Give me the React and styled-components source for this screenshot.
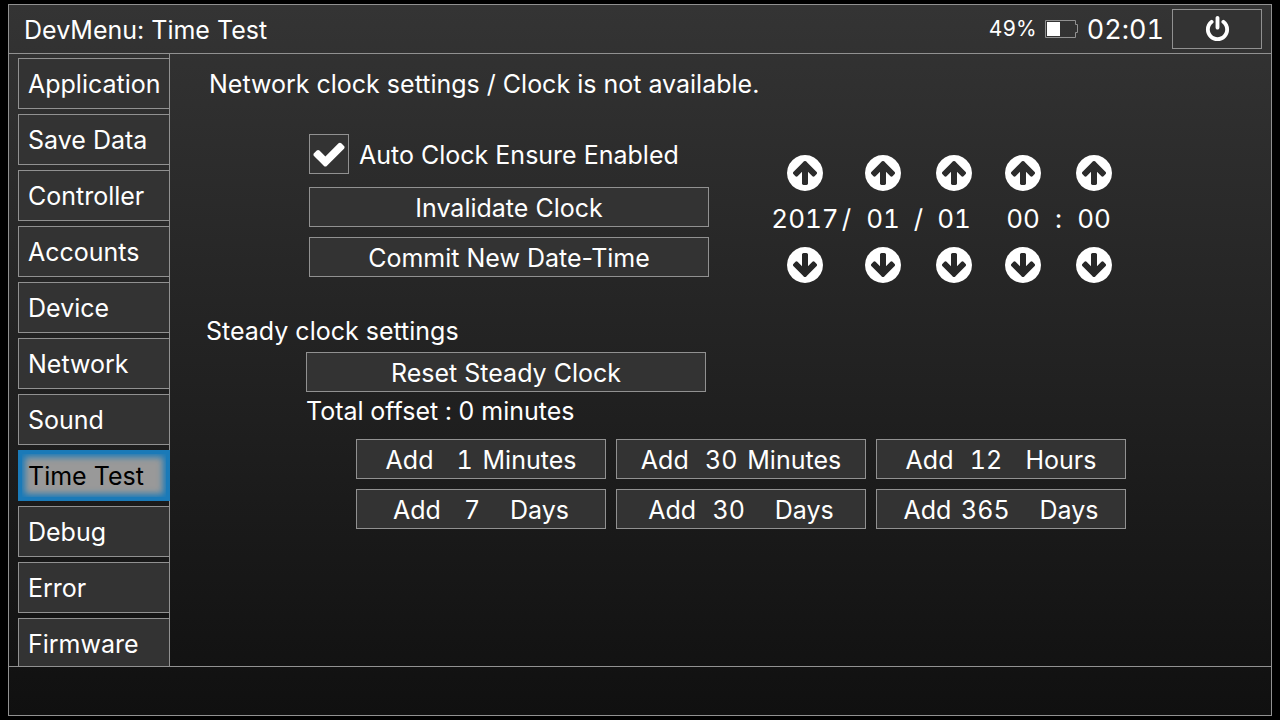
import React, { useState } from "react";
import styled, { createGlobalStyle } from "styled-components";

const LINE = "#919191";

const GlobalStyle = createGlobalStyle`
  *, *::before, *::after { box-sizing: border-box; }
  body {
    margin: 0;
    background: #000;
    color: #fff;
    font: 25px/32px Inter, "Liberation Sans", sans-serif;
    font-variant-ligatures: no-contextual;
  }
  button, input { font: inherit; color: inherit; margin: 0; }
  h1, h2, p { margin: 0; font: inherit; }
`;

const Page = styled.div`
  height: 100vh;
  padding: 4px 8px;
`;

const Frame = styled.div`
  height: 100%;
  display: flex;
  flex-direction: column;
  border: 1px solid ${LINE};
  background: linear-gradient(#343434, #101010);
`;

const Header = styled.header`
  display: flex;
  align-items: center;
  flex: none;
  padding: 4px 9px 4px 15px;
  border-bottom: 1px solid ${LINE};
`;

const Title = styled.h1`
  flex: 1;
  padding-top: 2px;
`;

const Status = styled.div`
  display: flex;
  align-items: center;
  gap: 8px;
  font-variant-numeric: tabular-nums;
`;

const Percent = styled.span`
  font-size: 21px;
`;

const Clock = styled.time`
  padding-top: 2px;
  font-size: 27px;
`;

const Button = styled.button`
  display: flex;
  align-items: center;
  justify-content: center;
  gap: 3px;
  width: ${(p) => p.$width};
  height: 40px;
  padding: ${(p) => (p.$icon ? "0" : "2px 0 0")};
  border: 1px solid ${LINE};
  background: #333;
  white-space: pre;
  font-variant-numeric: ${(p) => (p.$tabular ? "tabular-nums" : "normal")};
`;

const Body = styled.div`
  display: flex;
  flex: 1;
  min-height: 0;
`;

const Sidebar = styled.nav`
  position: relative;
  z-index: 1;
  flex: 0 0 161px;
  display: flex;
  flex-direction: column;
  gap: 5px;
  padding: 4px 0 0 9px;
  overflow: hidden;
`;

const Tab = styled.button`
  flex: 0 0 51px;
  padding: 0 9px;
  border: 1px solid ${LINE};
  background: #333;
  text-align: left;
  white-space: nowrap;

  &[aria-current="page"] {
    border-color: #1a7ab8;
    background: #999;
    color: #000;
    box-shadow: inset 0 0 0 3px #1a7ab8, inset 0 0 6px 6px #1a7ab8;
  }
`;

const Content = styled.main`
  flex: 1;
  min-width: 0;
  margin-left: -1px;
  padding: 14px 36px;
  border-left: 1px solid ${LINE};
`;

const NetworkSection = styled.section`
  padding-left: 3px;
`;

const NetworkControls = styled.div`
  display: flex;
  gap: 63px;
  padding: 34px 0 32px 100px;
`;

const ClockActions = styled.div`
  display: flex;
  flex-direction: column;
  gap: 10px;
`;

const CheckLabel = styled.label`
  display: flex;
  align-items: center;
  gap: 10px;
  margin-bottom: 3px;
`;

const CheckText = styled.span`
  padding-top: 2px;
`;

const CheckBox = styled.span`
  display: grid;
  place-items: center;
  width: 40px;
  height: 40px;

  > * { grid-area: 1 / 1; }
  > svg { pointer-events: none; }
  > input:not(:checked) + svg { visibility: hidden; }
`;

const CheckInput = styled.input`
  appearance: none;
  width: 40px;
  height: 40px;
  border: 1px solid ${LINE};
  background: #333;
`;

const DateTime = styled.div`
  display: flex;
  align-items: center;
  padding-top: 21px;
  align-self: flex-start;
  font-size: 26px;
  line-height: 56px;
  font-variant-numeric: tabular-nums;
`;

const Field = styled.div`
  display: flex;
  flex-direction: column;
  align-items: center;
  width: ${(p) => (p.$wide ? "66px" : "36px")};
`;

const Separator = styled.span`
  width: ${(p) => p.$width || "35px"};
  text-align: center;
`;

const YearSeparator = styled(Separator)`
  padding-right: 10px;
`;

const Stepper = styled.button`
  display: block;
  padding: 0;
  border: 0;
  background: none;

  svg {
    display: block;
    transform: ${(p) => (p.$down ? "rotate(180deg)" : "none")};
  }
`;

const SteadyBody = styled.div`
  padding: 5px 0 0 100px;
`;

const Offset = styled.p`
  padding: 3px 0 12px;
  font-variant-numeric: tabular-nums;
`;

const OffsetGrid = styled.div`
  display: grid;
  grid-template-columns: repeat(3, 250px);
  gap: 10px;
  padding-left: 50px;
`;

const Footer = styled.footer`
  flex: 0 0 49px;
  border-top: 1px solid ${LINE};
`;

const PowerIcon = () => (
  <svg width="27" height="27" viewBox="0 0 1792 1792" fill="#fff" aria-hidden="true">
    <path d="M1664 896q0 156-61 298t-164 245-245 164-298 61-298-61-245-164-164-245-61-298q0-182 80.5-343t226.5-270q43-32 95.5-25t83.5 50q32 42 24.5 94.5t-49.5 84.5q-98 74-151.5 181t-53.5 228q0 104 40.5 198.5t109.5 163.5 163.5 109.5 198.5 40.5 198.5-40.5 163.5-109.5 109.5-163.5 40.5-198.5q0-121-53.5-228t-151.5-181q-42-32-49.5-84.5t24.5-94.5q31-43 84-50t95 25q146 109 226.5 270t80.5 343zm-640-768v640q0 52-38 90t-90 38-90-38-38-90v-640q0-52 38-90t90-38 90 38 38 90z" />
  </svg>
);

const CheckIcon = () => (
  <svg width="36" height="36" viewBox="0 0 1792 1792" fill="#fff" aria-hidden="true">
    <path d="M1671 566q0 40-28 68l-724 724-136 136q-28 28-68 28t-68-28l-136-136-362-362q-28-28-28-68t28-68l136-136q28-28 68-28t68 28l294 295 656-657q28-28 68-28t68 28l136 136q28 28 28 68z" />
  </svg>
);

const ArrowIcon = () => (
  <svg width="36" height="36" viewBox="128 128 1536 1536" fill="#fff" aria-hidden="true">
    <path d="M1412 897q0-27-18-45l-362-362-91-91q-18-18-45-18t-45 18l-91 91-362 362q-18 18-18 45t18 45l91 91q18 18 45 18t45-18l189-189v502q0 26 19 45t45 19h128q26 0 45-19t19-45v-502l189 189q19 19 45 19t45-19l91-91q18-18 18-45zm252-1q0 209-103 385.5t-279.5 279.5-385.5 103-385.5-103-279.5-279.5-103-385.5 103-385.5 279.5-279.5 385.5-103 385.5 103 279.5 279.5 103 385.5z" />
  </svg>
);

const BatteryIcon = () => (
  <svg width="34" height="18" viewBox="0 0 34 18" aria-hidden="true">
    <path d="M0.5 0.5H30.5V4.5H32.5V12.5H30.5V17.5H0.5Z" fill="none" stroke={LINE} />
    <rect x="2" y="2" width="13" height="14" fill="#fff" />
  </svg>
);

const TABS = [
  "Application",
  "Save Data",
  "Controller",
  "Accounts",
  "Device",
  "Network",
  "Sound",
  "Time Test",
  "Debug",
  "Error",
  "Firmware",
];

const OFFSETS = [
  [1, "Minutes"],
  [30, "Minutes"],
  [12, "Hours"],
  [7, "Days"],
  [30, "Days"],
  [365, "Days"],
];

function DateField({ name, value, wide }) {
  return (
    <Field $wide={wide}>
      <Stepper aria-label={`Increase ${name}`}>
        <ArrowIcon />
      </Stepper>
      <span>{value}</span>
      <Stepper $down aria-label={`Decrease ${name}`}>
        <ArrowIcon />
      </Stepper>
    </Field>
  );
}

export default function App() {
  const [tab, setTab] = useState("Time Test");

  return (
    <Page>
      <GlobalStyle />
      <Frame>
        <Header>
          <Title>DevMenu: Time Test</Title>
          <Status>
            <Percent>49%</Percent>
            <BatteryIcon />
            <Clock>02:01</Clock>
            <Button $width="90px" $icon aria-label="Power">
              <PowerIcon />
            </Button>
          </Status>
        </Header>
        <Body>
          <Sidebar>
            {TABS.map((name) => (
              <Tab
                key={name}
                aria-current={name === tab ? "page" : undefined}
                onClick={() => setTab(name)}
              >
                {name}
              </Tab>
            ))}
          </Sidebar>
          <Content>
            <NetworkSection>
              <h2>Network clock settings / Clock is not available.</h2>
              <NetworkControls>
                <ClockActions>
                  <CheckLabel>
                    <CheckBox>
                      <CheckInput type="checkbox" defaultChecked />
                      <CheckIcon />
                    </CheckBox>
                    <CheckText>Auto Clock Ensure Enabled</CheckText>
                  </CheckLabel>
                  <Button $width="400px">Invalidate Clock</Button>
                  <Button $width="400px">Commit New Date-Time</Button>
                </ClockActions>
                <DateTime>
                  <DateField name="year" value="2017" wide />
                  <YearSeparator $width="27px">/</YearSeparator>
                  <DateField name="month" value="01" />
                  <Separator>/</Separator>
                  <DateField name="day" value="01" />
                  <Separator $width="33px" />
                  <DateField name="hour" value="00" />
                  <Separator>:</Separator>
                  <DateField name="minute" value="00" />
                </DateTime>
              </NetworkControls>
            </NetworkSection>
            <section>
              <h2>Steady clock settings</h2>
              <SteadyBody>
                <Button $width="400px">Reset Steady Clock</Button>
                <Offset>Total offset : 0 minutes</Offset>
                <OffsetGrid>
                  {OFFSETS.map(([count, unit]) => (
                    <Button key={count + unit} $width="100%" $tabular>
                      <span>{"Add "}</span>
                      <span>{String(count).padStart(3)}</span>
                      <span>{" " + unit.padStart(7)}</span>
                    </Button>
                  ))}
                </OffsetGrid>
              </SteadyBody>
            </section>
          </Content>
        </Body>
        <Footer />
      </Frame>
    </Page>
  );
}
